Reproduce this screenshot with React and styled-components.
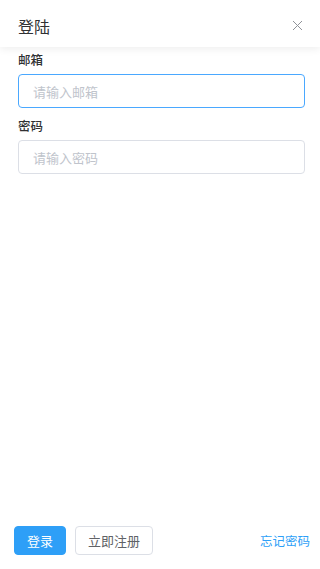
import React from 'react'
import styled, { createGlobalStyle } from 'styled-components'

const Global = createGlobalStyle`
  html, body {
    margin: 0;
    padding: 0;
    background: #fff;
  }
  body {
    font-family: "Noto Sans CJK SC", "Liberation Sans", sans-serif;
    color: #303133;
  }
  * {
    box-sizing: border-box;
  }
`

const Drawer = styled.div`
  width: 320px;
  height: 569px;
  display: flex;
  flex-direction: column;
  background: #fff;
`

const Header = styled.div`
  height: 47px;
  flex: none;
  display: flex;
  align-items: center;
  justify-content: space-between;
  padding: 0 17px 0 18px;
  box-shadow: 0 2px 8px rgba(0, 0, 0, 0.07);
  position: relative;
  z-index: 1;
  .title {
    font-size: 16px;
    color: #303133;
    line-height: 20px;
    padding-top: 5px;
  }
`

const CloseButton = styled.button`
  border: none;
  background: none;
  padding: 0;
  width: 11px;
  height: 11px;
  display: flex;
  cursor: pointer;
  margin-top: 3px;
`

const Form = styled.div`
  flex: 1;
  padding: 3px 15px 0 18px;
`

const Field = styled.div`
  margin-bottom: 8px;
`

const Label = styled.div`
  font-size: 12.5px;
  font-weight: 500;
  color: #303133;
  line-height: 20px;
  margin-bottom: 4px;
`

const Input = styled.input`
  width: 100%;
  height: 34px;
  border: 1px solid ${p => (p.$focused ? '#4aa8ff' : '#dcdfe6')};
  border-radius: 4px;
  padding: 0 14px;
  font-size: 13px;
  font-family: inherit;
  color: #606266;
  outline: none;
  background: #fff;
  &::placeholder {
    color: #c0c4cc;
  }
`

const Footer = styled.div`
  flex: none;
  display: flex;
  align-items: center;
  padding: 0 10px 14px 14px;
  gap: 9px;
`

const Button = styled.button`
  height: 29px;
  padding: 0;
  font-size: 13px;
  font-family: inherit;
  border-radius: 4px;
  cursor: pointer;
  border: 1px solid ${p => (p.$primary ? '#2e9ff7' : '#dcdfe6')};
  background: ${p => (p.$primary ? '#2e9ff7' : '#fff')};
  color: ${p => (p.$primary ? '#fff' : '#606266')};
  width: ${p => (p.$primary ? '52px' : '78px')};
`

const Link = styled.a`
  margin-left: auto;
  font-size: 12.5px;
  color: #2e9ff7;
  text-decoration: none;
  cursor: pointer;
`

export default function App() {
  return (
    <Drawer>
      <Global />
      <Header>
        <span className="title">登陆</span>
        <CloseButton aria-label="close">
          <svg width="11" height="11" viewBox="0 0 11 11">
            <path d="M1 1 L10 10 M10 1 L1 10" stroke="#909399" strokeWidth="1" fill="none" />
          </svg>
        </CloseButton>
      </Header>
      <Form>
        <Field>
          <Label>邮箱</Label>
          <Input $focused placeholder="请输入邮箱" />
        </Field>
        <Field>
          <Label>密码</Label>
          <Input type="password" placeholder="请输入密码" />
        </Field>
      </Form>
      <Footer>
        <Button $primary>登录</Button>
        <Button>立即注册</Button>
        <Link>忘记密码</Link>
      </Footer>
    </Drawer>
  )
}
